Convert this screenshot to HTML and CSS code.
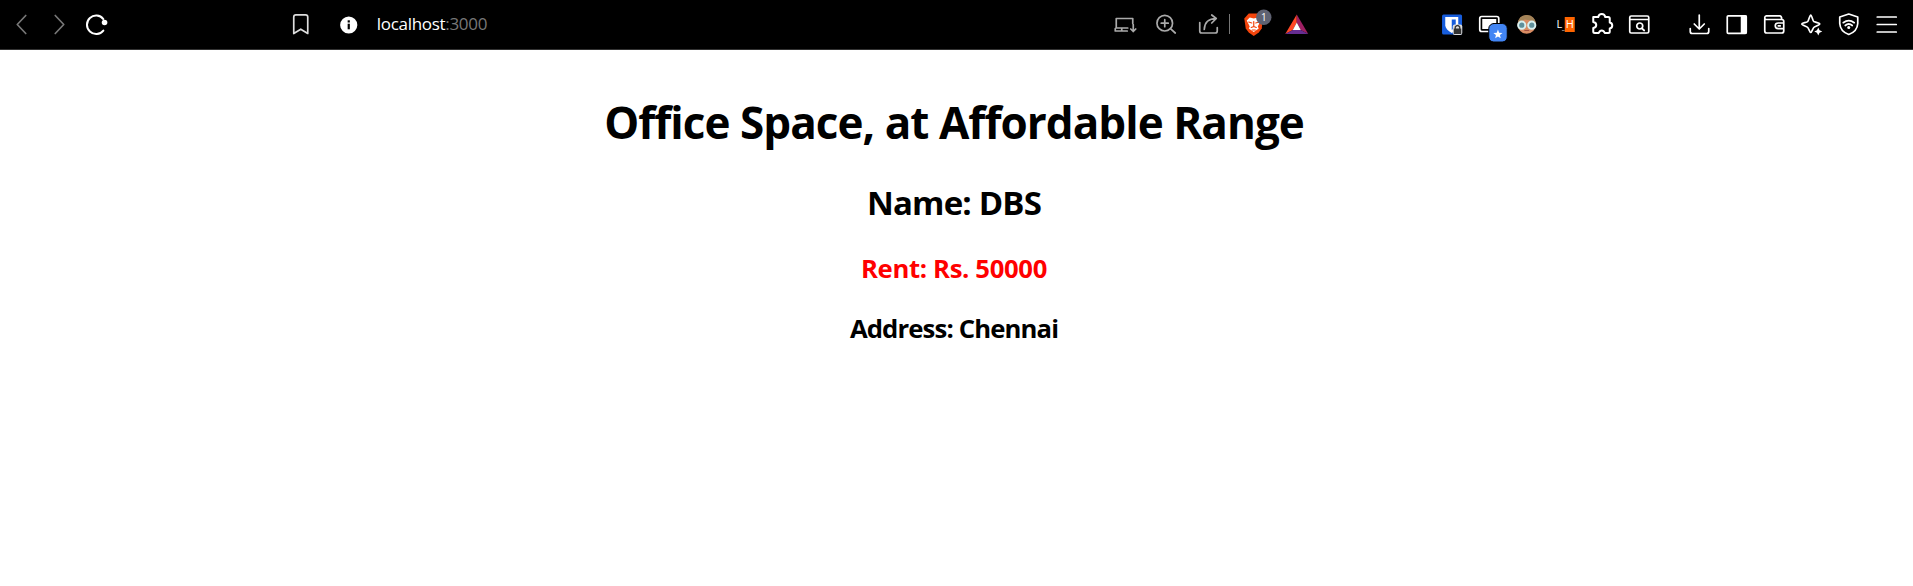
FILE: index.html
```html
<!DOCTYPE html>
<html lang="en">
<head>
<meta charset="utf-8">
<title>Office Space</title>
<link rel="stylesheet" href="styles.css">
</head>
<body>
<header class="toolbar">
  <nav class="group nav">
    <svg class="icon dim" viewBox="-18.75 -24.5 37.5 49"><path d="M4-9-4.5 0 4 9"/></svg>
    <svg class="icon dim" viewBox="-18.75 -24.5 37.5 49"><path d="M-3.5-9 5 0-3.5 9"/></svg>
    <svg class="icon" viewBox="-18.75 -24.5 37.5 49"><path stroke-width="2" d="M6.6-5.5A9.2 9.2 0 1 0 6.6 6"/><circle class="solid" cx="7.8" cy="-2" r="2.8"/></svg>
  </nav>
  <div class="address">
    <svg class="icon soft" viewBox="-18.75 -24.5 37.5 49"><path d="M-7 9V-7.5Q-7-9.7-4.8-9.7H4.8Q7-9.7 7-7.5V9L0 4.7Z"/></svg>
    <svg class="icon info" viewBox="-18.75 -24.5 37.5 49"><circle class="solid" cy=".5" r="8.6"/><g fill="#000" stroke="none"><rect x="-1.1" y="-.8" width="2.2" height="5.6"/><rect x="-1.1" y="-4.2" width="2.2" height="2.2"/></g></svg>
    <span class="url">localhost<span class="port">:3000</span></span>
  </div>
  <div class="group page-actions">
    <svg class="icon gray" viewBox="-18.75 -24.5 37.5 49"><path d="M8-1V-6H-8.5V3.5H3M-9.5 4V6.5H2.5M-3 4V6.5M8.500 0V7M6 4.5 8.500 7 11 4.5"/></svg>
    <svg class="icon gray" viewBox="-18.75 -24.5 37.5 49"><circle cx="-2" cy="-1.3" r="7.8"/><path d="M3.7 4.2 8.5 8.500M-5.500-1.3H1.500M-2-4.8V2.200"/></svg>
    <svg class="icon gray" viewBox="-18.75 -24.5 37.5 49"><path d="M-8-2V6.500Q-8 8.500-6 8.500H7.500Q9.500 8.500 9.500 6.500V3M-3.500 5Q-3-6 8.500-6M4-9.500 8.500-6 4-1.500"/></svg>
  </div>
  <span class="divider"></span>
  <div class="group brave">
    <svg class="icon" viewBox="-18.75 -24.5 37.5 49">
      <path fill="#f4450c" stroke="none" d="M-5-11H5L9-7 8 4 5 8 0 11.5-5 8-8 4-9.5-6Z"/>
      <path class="solid" d="M-7-4-4-7 0-6 4-7 7-4 4 2 5 4 0 7.5-5 4-4 2Z"/>
      <path stroke="#f4450c" stroke-width="1.2" d="M-5-2.5-2-1.5M5-2.5 2-1.5M0-3V2M-2.5 3 0 2 2.5 3M-1.5 5.5H1.5"/>
      <circle cx="10" cy="-7.3" r="7.7" fill="#5f6272" stroke="none"/>
      <text class="count" x="10" y="-3.7">1</text>
    </svg>
    <svg class="icon" viewBox="-18.75 -24.5 37.5 49">
      <g stroke="none"><path fill="#ff4724" d="M0-10-11.5 9.5-4 5.5 0-2Z"/><path fill="#9e1f63" d="M0-10 11.5 9.5 4 5.5 0-2Z"/><path fill="#662d91" d="M-11.5 9.5H11.5L4 5.5H-4Z"/><path fill="#fff" d="M0-2-4 5.5H4Z"/></g>
    </svg>
  </div>
  <div class="group extensions">
    <svg class="icon" viewBox="-18.75 -24.5 37.5 49">
      <rect x="-9.7" y="-10" width="20" height="20" rx="1.5" fill="#175ddc" stroke="none"/>
      <path class="solid" d="M-6.5-7.500H6.500V1Q5 6 0 8.500-6 5-6.500 1Z"/><path fill="#175ddc" stroke="none" d="M0-5H4V1Q3 4 0 5.500Z"/>
      <rect x="1" y="0" width="9.500" height="10.500" rx="2" fill="#ddd" stroke="none"/><rect x="2" y="4" width="7.500" height="5.500" fill="#333" stroke="none"/><path stroke="#333" stroke-width="1.3" d="M3.500 4V2.500Q5.700-.5 8 2.500V4"/>
    </svg>
    <svg class="icon" viewBox="-18.75 -24.5 37.5 49">
      <rect x="-9" y="-8" width="19" height="15" rx="2"/><rect class="solid" x="-6.5" y="-5.500" width="14" height="10"/>
      <rect x="0" y="-1" width="18.500" height="18.500" rx="5" fill="#4285f4" stroke="#000" stroke-width="1"/>
      <path class="solid" d="M9.2 5 10.400 8.300 13.800 8.500 11.200 10.600 12 13.800 9.200 12 6.400 13.800 7.200 10.600 4.600 8.500 8 8.300Z"/>
    </svg>
    <svg class="icon" viewBox="-18.75 -24.5 37.5 49">
      <circle r="9.2" fill="#d98c63" stroke="none"/><path fill="#a38358" stroke="none" d="M-9-1Q-8-9.5 0-9.5T9-1L4-4-2-5Z"/>
      <g fill="#5f909b" stroke="#d8f0f0" stroke-width="2"><circle cx="-5" cy=".7" r="3.6"/><circle cx="5" cy=".7" r="3.6"/></g><path stroke="#a14e3f" stroke-width="1" d="M-2 6H2"/>
    </svg>
    <svg class="icon" viewBox="-18.75 -24.5 37.5 49">
      <rect x="1" y="-7.5" width="10" height="15" fill="#ff6500" stroke="none"/><text class="letter" x="-4.5" y="3.7">L</text><text class="letter" x="6" y="3.7">H</text><path stroke="#777" stroke-width="1" d="M-1.5 6H.5"/>
    </svg>
    <svg class="icon" viewBox="-18.75 -24.5 37.5 49"><path stroke-width="2" d="M-8.5-7.5H-3.5Q-3-10.500 0-10.500T3.500-7.500H6.500Q8-7.500 8-6V-2Q10.500-1.500 10.500 1T8 4V7Q8 8.500 6.500 8.500H3Q2 6 0 6T-3 8.500H-7Q-8.500 8.500-8.500 7V3.500Q-5.500 3-5.500 .5T-8.500-2.500Z"/></svg>
    <svg class="icon" viewBox="-18.75 -24.5 37.5 49"><rect x="-9" y="-8.5" width="19" height="17" rx="1.5"/><path d="M-8.500-5H9.500M3.300 4 5.500 6"/><circle cx="1" cy="1.5" r="3"/></svg>
  </div>
  <div class="group tools">
    <svg class="icon" viewBox="-18.75 -24.5 37.5 49"><path d="M.5-9.500V4M-4.500-.5 .5 4.500 5.500-.5M-8.500 4V7Q-8.500 9-6.500 9H8Q10 9 10 7V4"/></svg>
    <svg class="icon" viewBox="-18.75 -24.5 37.5 49"><rect x="-9.5" y="-8.7" width="19" height="17.5" rx="1"/><rect class="solid" x="4" y="-9" width="6" height="18"/></svg>
    <svg class="icon" viewBox="-18.75 -24.5 37.5 49"><path d="M-9-6V6.500Q-9 8.500-7 8.500H8Q10 8.500 10 6.500V-3Q10-5 8-5H-7.500Q-9-5-9-6.700T-7.500-8.700H6Q8-8.700 8-5M10-1.500H4.500Q1.500-1.500 1.500 1.200T4.500 4.200H10M4.500 1.300H6.500"/></svg>
    <svg class="icon" viewBox="-18.75 -24.5 37.5 49"><path d="M-1-9.500C0-9.500 1-3.500 2-3S8-1.500 8-.5 3 2 2 3 0 8-1 8-3 4-4 3-10 .5-10-.5-5-2-4-3-2-9.500-1-9.500Z"/><path class="solid" d="M6.500 3 7.800 5.700 10.500 7 7.800 8.300 6.500 11 5.200 8.300 2.500 7 5.200 5.700Z"/></svg>
    <svg class="icon" viewBox="-18.75 -24.5 37.5 49"><path d="M0-10.500 9-7.500V-1Q8.500 7 0 10-8.500 7-9-1V-7.500ZM-5.500-1.800Q0-6 5.500-1.800M-3.500 1Q0-2 3.500 1"/><circle class="solid" cy="3" r="1.5"/></svg>
    <svg class="icon menu" viewBox="-18.75 -24.5 37.5 49"><path d="M-9.500-7.500H9.500M-9.500 0H9.500M-9.500 7.500H9.500"/></svg>
  </div>
</header>
<main class="listing">
  <h1 class="title">Office Space, at Affordable Range</h1>
  <h2 class="name">Name: DBS</h2>
  <h3 class="rent">Rent: Rs. 50000</h3>
  <h3 class="location">Address: Chennai</h3>
</main>
</body>
</html>
```
FILE: styles.css
```css
body {
  margin: 0;
  background: #fff;
  color: #000;
  font-family: "Segoe UI", "Open Sans", "Noto Sans", sans-serif;
  overflow: hidden;
}

.toolbar {
  box-sizing: border-box;
  display: flex;
  height: 50px;
  padding-left: 2.75px;
  background: #000;
  border-bottom: 1px solid #333;
}

.group,
.address {
  display: flex;
  flex: none;
}

.icon {
  display: block;
  flex: none;
  width: 37.5px;
  height: 49px;
  overflow: visible;
  fill: none;
  stroke: #fff;
  stroke-width: 1.7;
  stroke-linecap: round;
  stroke-linejoin: round;
}

.solid { fill: #fff; stroke: none; }
.dim { stroke: #777; }
.soft { stroke: #ddd; }
.gray { stroke: #aaa; }

.address { margin-left: 166.5px; width: 300px; }
.info { margin-left: 11px; }

.url {
  margin-left: 9px;
  color: #fff;
  font-size: 17px;
  line-height: 48px;
  letter-spacing: -0.3px;
  white-space: nowrap;
}

.port { color: #777; }

.page-actions { margin-left: 524.5px; gap: 4px; }
.divider { width: 1px; height: 20px; margin: 14px 0 0 2.5px; background: #777; }
.brave { margin-left: 4.5px; gap: 5.5px; }
.extensions { margin-left: auto; }
.tools { margin: 0 7.75px 0 22.5px; }

.count,
.letter {
  fill: #fff;
  stroke: none;
  font-size: 10px;
  text-anchor: middle;
}

.letter { font-size: 11px; }

.listing {
  width: 1908px;
  text-align: center;
}

.listing > * { margin: 0; font-weight: 700; }

.title { padding-top: 42px; font-size: 44px; line-height: 60px; letter-spacing: -0.95px; }
.name { padding-top: 29px; font-size: 33px; line-height: 44px; letter-spacing: -0.8px; }
.rent,
.location { font-size: 25.7px; line-height: 34px; }
.rent { padding-top: 27px; color: #f00; letter-spacing: -0.35px; }
.location { padding-top: 26px; letter-spacing: -0.87px; }
```
